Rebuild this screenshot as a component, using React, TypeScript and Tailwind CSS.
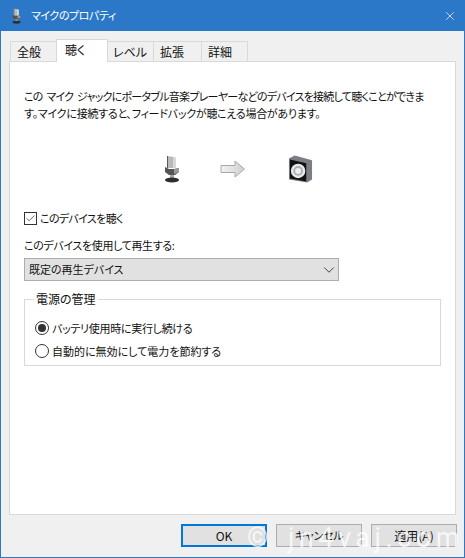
import React from 'react';
import { ChevronDown, X, Check } from 'lucide-react';

const FONT = 'font-["Noto_Sans_CJK_JP","Noto_Sans",sans-serif] [font-feature-settings:"palt"]';

const MicIcon = ({ className }: { className: string }) => (
  <svg viewBox="0 0 16 28" className={className}>
    <path d="M3 1 L10 2 L12 3 L12 13 L3 13 Z" fill="#b9b9b9" />
    <path d="M3 1 L4 1 L4 13 L3 13 Z" fill="#5a5a5a" />
    <path d="M9 2 L12 3 L12 13 L9 13 Z" fill="#d8d8d8" />
    <path d="M1 12 L5 14 L10 14 L15 13 L15 17 L11 20 L5 20 L1 17 Z" fill="#555" />
    <path d="M10 14 L15 13 L15 17 L10 19 Z" fill="#9a9a9a" />
    <rect x="6" y="20" width="4" height="4" fill="#aaa" />
    <ellipse cx="8" cy="25" rx="7" ry="2.6" fill="#2e2e2e" />
  </svg>
);

const SpeakerIcon = () => (
  <svg viewBox="0 0 26 30" className="w-[25px] h-[30px]">
    <path d="M1 4 L7 1 L25 6 L25 26 L20 29 L1 26 Z" fill="#7b7f85" />
    <path d="M2 5 L19 9 L19 28 L2 25 Z" fill="#111" />
    <circle cx="10.500" cy="17" r="7.500" fill="#e6e8ea" />
    <circle cx="10.500" cy="17" r="5" fill="#aab2b8" />
    <circle cx="10.500" cy="17" r="3" fill="#eef0f2" />
  </svg>
);

const ArrowIcon = () => (
  <svg viewBox="0 0 26 18" className="w-[26px] h-[18px]">
    <defs>
      <linearGradient id="arrowFill" x1="0" x2="1" y1="0" y2="0">
        <stop offset="0" stopColor="#f2f2f2" />
        <stop offset="1" stopColor="#cfcfcf" />
      </linearGradient>
    </defs>
    <path d="M1 5.5 H15 V1 L24.500 9 L15 17 V12.500 H1 Z" fill="url(#arrowFill)" stroke="#a8a8a8" strokeWidth="1" />
  </svg>
);

const tabs = [
  { label: '全般', width: 'w-[47px]' },
  { label: '聴く', width: 'w-[52px]' },
  { label: 'レベル', width: 'w-[48px]' },
  { label: '拡張', width: 'w-[49px]' },
  { label: '詳細', width: 'w-[47px]' },
];

const Tab = ({ label, width, active }: { label: string; width: string; active: boolean }) =>
  active ? (
    <div className={`relative z-10 -mb-px -ml-px -mr-px h-[23px] ${width} bg-white border border-b-0 border-[#d9d9d9] pl-[8px] pt-[1px] text-[12px] leading-[17px]`}>
      {label}
    </div>
  ) : (
    <div className={`mt-[2px] h-[20px] ${width} -ml-px first:ml-0 bg-[#f0f0f0] border border-b-0 border-[#d9d9d9] pl-[6px] text-[12px] leading-[20px]`}>
      {label}
    </div>
  );

const Radio = ({ on, label, tracking }: { on: boolean; label: string; tracking: string }) => (
  <div className="flex items-center h-[16px] gap-[3px]">
    <div className="w-[14px] h-[14px] rounded-full border border-[#333] bg-white flex items-center justify-center">
      {on && <div className="w-[8px] h-[8px] rounded-full bg-[#333]" />}
    </div>
    <span className={`text-[11px] leading-[16px] ${tracking}`}>{label}</span>
  </div>
);

const Btn = ({ label, primary, small }: { label: string; primary?: boolean; small?: boolean }) => (
  <div
    className={`w-[86px] h-[23px] flex items-center justify-center bg-[#e1e1e1] ${small ? 'text-[11px] tracking-[-0.3px]' : 'text-[12px]'} ${
      primary ? 'border-2 border-[#0078d7]' : 'border border-[#adadad]'
    }`}
  >
    {label}
  </div>
);

export default function App() {
  return (
    <div className={`relative w-[465px] h-[558px] overflow-hidden flex flex-col bg-[#f0f0f0] border-x border-b border-[#2b78c9] text-[#111] ${FONT}`}>
      {/* title bar */}
      <div className="h-[31px] shrink-0 bg-[#2b78c9] flex items-center -mx-px pl-[12px] pr-[8px]">
        <MicIcon className="w-[9px] h-[16px]" />
        <span className="ml-[10px] text-[11px] tracking-[-0.45px] text-white">マイクのプロパティ</span>
        <X className="ml-auto w-[14px] h-[14px] text-white" strokeWidth={1.2} />
      </div>

      {/* tabs */}
      <div className="h-[30px] shrink-0 flex items-end pl-[9px]">
        {tabs.map((t) => (
          <Tab key={t.label} label={t.label} width={t.width} active={t.label === '聴く'} />
        ))}
      </div>

      {/* panel */}
      <div className="mx-[8px] h-[454px] shrink-0 bg-white border border-[#d9d9d9] pl-[14px] pr-[13px] pt-[26px]">
        <p className="text-[11px] leading-[17px] whitespace-nowrap">
          <span className="tracking-[-0.75px] [word-spacing:2px]">この マイク ジャックにポータブル音楽プレーヤーなどのデバイスを接続して聴くことができま</span>
          <br />
          <span className="tracking-[-0.25px]">す。マイクに接続すると、フィードバックが聴こえる場合があります。</span>
        </p>

        <div className="mt-[30px] ml-[140px] flex items-center h-[34px]">
          <MicIcon className="w-[16px] h-[28px]" />
          <div className="ml-[40px]"><ArrowIcon /></div>
          <div className="ml-[42px]"><SpeakerIcon /></div>
        </div>

        <div className="mt-[24px] flex items-center h-[16px] gap-[3px]">
          <div className="w-[13px] h-[13px] border border-[#333] bg-white flex items-center justify-center">
            <Check className="w-[11px] h-[11px] text-[#333]" strokeWidth={1.6} />
          </div>
          <span className="text-[11px] tracking-[-0.65px] leading-[16px]">このデバイスを聴く</span>
        </div>

        <div className="mt-[11px] text-[11px] tracking-[-0.35px] leading-[16px]">このデバイスを使用して再生する:</div>

        <div className="mt-[5px] w-[315px] h-[23px] bg-[#e1e1e1] border border-[#adadad] flex items-center pl-[4px] text-[11px]">
          既定の再生デバイス
          <ChevronDown className="ml-auto w-[18px] h-[18px] text-[#333]" strokeWidth={1.2} />
        </div>

        <fieldset className="mt-[10px] w-[417px] h-[75px] border border-[#d9d9d9] pl-[10px]">
          <legend className="ml-[-1px] px-[2px] text-[12px] leading-[16px]">電源の管理</legend>
          <div className="mt-[13px] flex flex-col gap-[7px]">
            <Radio on label="バッテリ使用時に実行し続ける" tracking="tracking-[-0.3px]" />
            <Radio on={false} label="自動的に無効にして電力を節約する" tracking="tracking-normal" />
          </div>
        </fieldset>
      </div>

      {/* buttons */}
      <div className="mt-[9px] flex justify-end gap-[9px] pr-[7px]">
        <Btn label="OK" primary />
        <Btn label="キャンセル" small />
        <Btn label="適用(A)" />
      </div>

      {/* watermark */}
      <div className="absolute left-[246px] top-[520px] font-['Roboto',sans-serif] text-[27px] leading-[36px] tracking-[4.5px] [word-spacing:4px] text-white/75 whitespace-nowrap">
        © jn4vaj.com
      </div>
    </div>
  );
}
